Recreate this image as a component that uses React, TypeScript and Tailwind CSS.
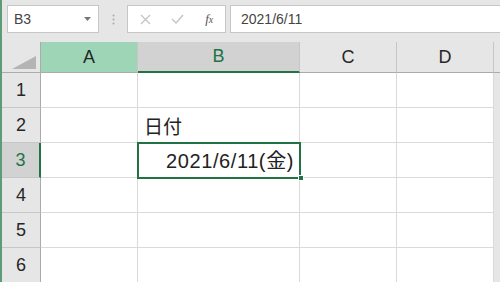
import React from 'react';

const font = { fontFamily: '"Liberation Sans", "Noto Sans CJK JP", sans-serif' };

const cols = [
  { name: 'A', w: 'w-[97px]', selected: 'col' },
  { name: 'B', w: 'w-[162px]', selected: 'active' },
  { name: 'C', w: 'w-[97px]', selected: '' },
  { name: 'D', w: 'w-[97px]', selected: '' },
];

const rows = [1, 2, 3, 4, 5, 6];

function FormulaBar() {
  return (
    <div className="flex h-[42px] items-start gap-0 pt-[5px] pl-[5px]">
      {/* name box */}
      <div className="flex h-[28px] w-[92px] items-center justify-between border border-[#c6c6c6] bg-white pl-[6px] pr-[7px]">
        <span className="text-[14px] text-[#444]">B3</span>
        <svg width="7" height="4" viewBox="0 0 7 4">
          <path d="M0 0h7L3.5 4z" fill="#777" />
        </svg>
      </div>
      <div className="flex h-[28px] w-[28px] items-center justify-center">
        <svg width="3" height="11" viewBox="0 0 3 11">
          <circle cx="1.5" cy="1.5" r="1" fill="#aaa" />
          <circle cx="1.5" cy="5.5" r="1" fill="#aaa" />
          <circle cx="1.5" cy="9.5" r="1" fill="#aaa" />
        </svg>
      </div>
      {/* buttons */}
      <div className="flex h-[28px] w-[99px] items-center border border-[#c6c6c6] bg-white">
        <div className="flex w-[34px] justify-center pl-[2px]">
          <svg width="11" height="11" viewBox="0 0 11 11">
            <path d="M1 1l9 9M10 1l-9 9" stroke="#c4c4c4" strokeWidth="1.3" />
          </svg>
        </div>
        <div className="flex w-[32px] justify-center">
          <svg width="13" height="10" viewBox="0 0 13 10">
            <path d="M1 5l4 4L12 1" stroke="#c4c4c4" strokeWidth="1.4" fill="none" />
          </svg>
        </div>
        <div className="flex w-[32px] justify-center">
          <span className="text-[13px] italic text-[#555]" style={{ fontFamily: '"Liberation Serif", serif' }}>
            f<span className="text-[10px]">x</span>
          </span>
        </div>
      </div>
      <div className="ml-[4px] flex h-[28px] flex-1 items-center border border-r-0 border-[#c6c6c6] bg-white pl-[10px]">
        <span className="text-[14px] text-[#444]">2021/6/11</span>
      </div>
    </div>
  );
}

function ColumnHeaders() {
  return (
    <div className="flex h-[31px]">
      <div className="flex h-full w-[39px] items-end justify-end border-r border-b border-[#ababab] bg-[#e6e6e6] pr-[4px] pb-[3px]">
        <svg width="24" height="13" viewBox="0 0 24 13">
          <path d="M24 0V13H0z" fill="#b4b4b4" />
        </svg>
      </div>
      {cols.map((c) => (
        <div
          key={c.name}
          className={`${c.w} flex h-full items-center justify-center border-r text-[18px] ${
            c.selected === 'col'
              ? 'border-b border-[#ababab] border-r-[#c6c6c6] bg-[#9fd5b7] text-[#262626]'
              : c.selected === 'active'
              ? 'border-b-2 border-b-[#217346] border-r-[#c6c6c6] bg-[#d2d2d2] text-[#217346]'
              : 'border-b border-[#ababab] border-r-[#c6c6c6] bg-[#e6e6e6] text-[#262626]'
          }`}
        >
          {c.name}
        </div>
      ))}
      <div className="h-full flex-1 border-b border-[#ababab] bg-[#e6e6e6]" />
    </div>
  );
}

function Row({ n }: { n: number }) {
  const active = n === 3;
  return (
    <div className="flex h-[35px]">
      <div
        className={`flex h-full w-[39px] items-center justify-center border-b border-[#c6c6c6] text-[18px] ${
          active
            ? 'border-r-2 border-r-[#217346] bg-[#d2d2d2] text-[#217346]'
            : 'border-r border-r-[#ababab] bg-[#e6e6e6] text-[#262626]'
        }`}
      >
        {n}
      </div>
      {cols.map((c) => (
        <div
          key={c.name}
          className={`${c.w} flex h-full items-center border-r border-b border-[#dadada] bg-white text-[19px] text-[#222]`}
        >
          {n === 2 && c.name === 'B' && (
            <span className="pl-[6px] pt-[2px]" style={{ fontFamily: '"Noto Sans CJK JP", sans-serif' }}>
              日付
            </span>
          )}
          {n === 3 && c.name === 'B' && (
            <span className="w-full pr-[5px] pt-[2px] text-right text-[20px] tracking-[0.6px]">2021/6/11(金)</span>
          )}
        </div>
      ))}
      <div className="h-full flex-1 bg-[#e6e6e6]" />
    </div>
  );
}

export default function App() {
  return (
    <div className="relative h-[282px] w-[500px] overflow-hidden bg-[#e6e6e6]" style={font}>
      <div className="border-l-2 border-[#5e9b78]">
        <FormulaBar />
        <ColumnHeaders />
        <div className="relative">
          {rows.map((n) => (
            <Row key={n} n={n} />
          ))}
          {/* active cell outline */}
          <div className="pointer-events-none absolute top-[69px] left-[135px] h-[37px] w-[164px] border-2 border-[#217346]" />
          <div className="absolute top-[102px] left-[296px] h-[6px] w-[6px] border border-white bg-[#217346]" />
        </div>
      </div>
    </div>
  );
}
